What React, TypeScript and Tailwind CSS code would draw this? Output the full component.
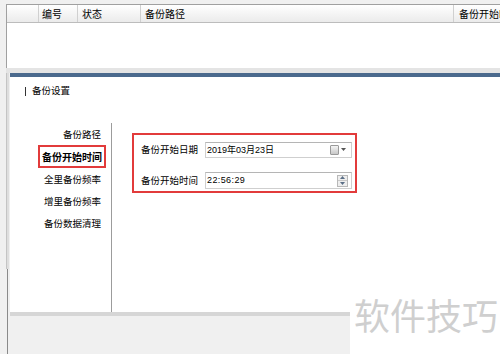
import React from "react";

const cjk = "font-['Noto_Sans_CJK_SC','Noto_Sans',sans-serif]";

function CalendarIcon() {
  return (
    <div className="flex items-center gap-[2px] mr-[5px]">
      <div className="w-[9px] h-[10px] border border-[#9a9a9a] bg-gradient-to-b from-[#f4f4f4] to-[#c8c8c8] rounded-[1px]" />
      <svg width="5" height="4" viewBox="0 0 5 4">
        <path d="M0 0 L5 0 L2.5 3 Z" fill="#555" />
      </svg>
    </div>
  );
}

function Spinner() {
  return (
    <div className="flex flex-col w-[11px] h-[12px] mr-[3px] border border-[#b8b8b8] bg-[#eeeeee]">
      <div className="flex-1 flex items-center justify-center border-b border-[#c8c8c8]">
        <svg width="5" height="3" viewBox="0 0 5 3">
          <path d="M0 3 L5 3 L2.5 0 Z" fill="#5a6e86" />
        </svg>
      </div>
      <div className="flex-1 flex items-center justify-center">
        <svg width="5" height="3" viewBox="0 0 5 3">
          <path d="M0 0 L5 0 L2.5 3 Z" fill="#5a6e86" />
        </svg>
      </div>
    </div>
  );
}

export default function App() {
  return (
    <div className={`w-[500px] h-[354px] bg-[#f0f0f0] relative overflow-hidden text-black ${cjk}`}>
      {/* top table */}
      <div className="pl-[6px] pt-[4px] h-[68px] flex">
        <div className="flex-1 border-l border-t border-[#a0a0a0] bg-white flex flex-col">
          <div className="h-[18px] flex border-b border-[#bcbcbc] bg-gradient-to-b from-white to-[#ebebeb] text-[10px] leading-[17px]">
            <div className="w-[32px] border-r border-[#d0d0d0]" />
            <div className="w-[39px] border-r border-[#d0d0d0] pl-[3px]">编号</div>
            <div className="w-[63px] border-r border-[#d0d0d0] pl-[4px]">状态</div>
            <div className="w-[313px] border-r border-[#d0d0d0] pl-[4px]">备份路径</div>
            <div className="flex-1 pl-[5px] whitespace-nowrap overflow-hidden">备份开始时间</div>
          </div>
          <div className="flex-1" />
        </div>
      </div>
      <div className="h-[5px] ml-[6px] bg-[#e4e4e4]" />

      {/* lower area */}
      <div className="flex h-[277px]">
        <div className="w-[10px] relative">
          <div className="ml-[6px] w-[3px] h-[196px] bg-[#dedede] border-l border-[#c4c4c4]" />
        </div>
        <div className="flex-1 flex flex-col">
          <div className="h-[4px] bg-[#4b6a8d]" />
          <div className="h-[235px] bg-white flex flex-col">
            <div className="flex items-center mt-[9px] ml-[15px] h-[10px]">
              <div className="w-[1px] h-[9px] bg-[#333]" />
              <div className="ml-[6px] text-[9.5px] leading-none">备份设置</div>
            </div>
            <div className="flex flex-1 mt-[27px]">
              <div className="w-[102px] border-r border-[#9c9c9c] flex flex-col text-[9.5px]">
                <div className="h-[22px] flex items-center justify-end pr-[10px]">备份路径</div>
                <div className="h-[23px] flex items-center justify-end pr-[5px]">
                  <span className="h-[23px] flex items-center border-2 border-[#e23b3b] px-[2px] font-bold text-[10px]">
                    备份开始时间
                  </span>
                </div>
                <div className="h-[22px] flex items-center justify-end pr-[10px]">全里备份频率</div>
                <div className="h-[22px] flex items-center justify-end pr-[10px]">增里备份频率</div>
                <div className="h-[22px] flex items-center justify-end pr-[10px]">备份数据清理</div>
              </div>
              <div className="flex-1">
                <div className="ml-[20px] mt-[10px] w-[225px] h-[60px] border-2 border-[#e23b3b] flex flex-col pl-[7px] pt-[7px] gap-[14px]">
                  <div className="flex items-center h-[16px]">
                    <div className="w-[64px] text-[9.5px] leading-none">备份开始日期</div>
                    <div className="w-[147px] h-[16px] border border-[#cfcfcf] border-t-[#b5b5b5] flex items-center justify-between">
                      <span className="pl-[1px] text-[9px] leading-none font-['Liberation_Sans','Noto_Sans_CJK_SC',sans-serif]">
                        2019年03月23日
                      </span>
                      <CalendarIcon />
                    </div>
                  </div>
                  <div className="flex items-center h-[17px]">
                    <div className="w-[64px] text-[9.5px] leading-none">备份开始时间</div>
                    <div className="w-[147px] h-[17px] border border-[#cfcfcf] border-t-[#b5b5b5] flex items-center justify-between">
                      <span className="pl-[1px] text-[9px] leading-none tracking-[0.4px] font-['Liberation_Sans',sans-serif]">
                        22:56:29
                      </span>
                      <Spinner />
                    </div>
                  </div>
                </div>
              </div>
            </div>
          </div>
          <div className="h-[4px] bg-[#d6d6d6]" />
        </div>
      </div>

      {/* left dark line */}
      <div className="absolute left-[7px] top-[269px] w-[1px] h-[85px] bg-[#8a8a8a]" />

      {/* watermark */}
      <div className="absolute right-0 bottom-0 w-[150px] h-[74px] bg-white">
        <div className="pl-[4px] pt-[16px] text-[36px] leading-none text-[#cfcfcf] whitespace-nowrap">
          软件技巧
        </div>
      </div>
    </div>
  );
}
